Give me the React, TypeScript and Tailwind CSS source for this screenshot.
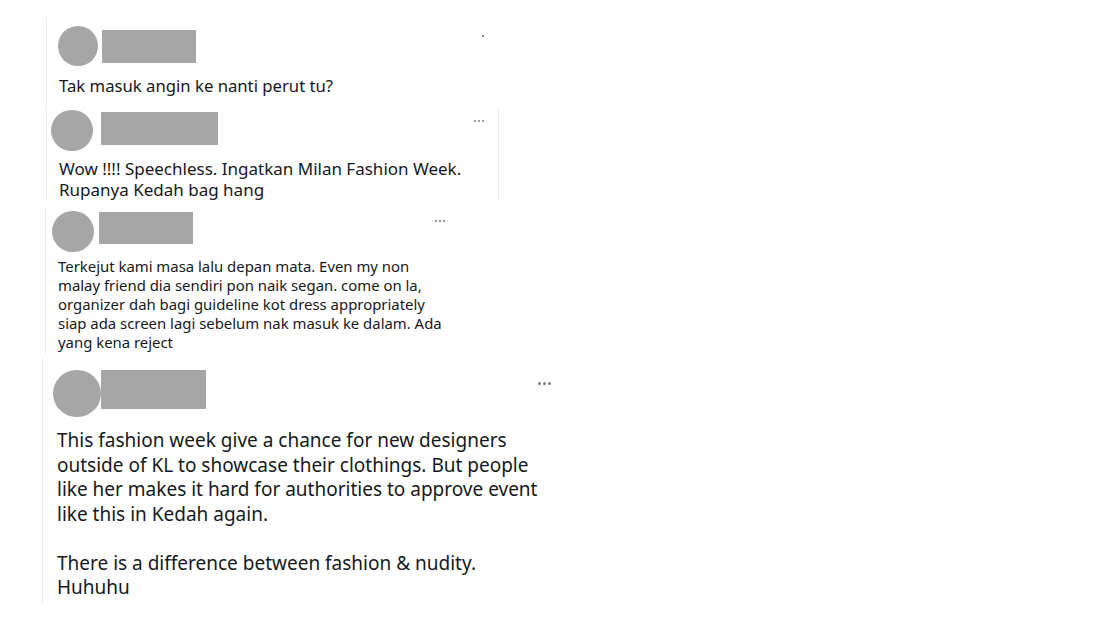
const font = { fontFamily: '"Segoe UI", "Noto Sans", "Open Sans", sans-serif' };

function Dots({ className, size }: { className: string; size: string }) {
    return (
        <div className={`absolute flex ${className}`}>
            <span className={`${size} rounded-full bg-[#7d7d7d]`} />
            <span className={`${size} rounded-full bg-[#7d7d7d]`} />
            <span className={`${size} rounded-full bg-[#7d7d7d]`} />
        </div>
    );
}

export default function App() {
    return (
        <div className="h-[619px] w-[1100px] overflow-hidden bg-white text-[#16191c]" style={font}>
            <div className="flex flex-col pt-[18px]">
                {/* reply 1 */}
                <div className="relative ml-[46px] h-[88px] w-[450px] border-l border-[#eeeeee]">
                    <div className="flex items-start pl-[11px] pt-[8px]">
                        <div className="h-[40px] w-[40px] rounded-full bg-[#a6a6a6]" />
                        <div className="ml-[4px] mt-[4px] h-[33px] w-[94px] bg-[#a6a6a6]" />
                    </div>
                    <p className="mt-[9px] pl-[12px] text-[16.7px] leading-[22px]">Tak masuk angin ke nanti perut tu?</p>
                    <div className="absolute left-[435px] top-[17px] h-[2px] w-[2px] rounded-full bg-[#555]" />
                </div>

                {/* reply 2 */}
                <div className="relative ml-[46px] mt-[1px] h-[94px] w-[453px] border-x border-[#eeeeee]">
                    <div className="flex items-start pl-[4px] pt-[3px]">
                        <div className="h-[41px] w-[42px] rounded-full bg-[#a6a6a6]" />
                        <div className="ml-[8px] mt-[2px] h-[33px] w-[117px] bg-[#a6a6a6]" />
                    </div>
                    <p className="mt-[7px] pl-[12px] text-[17px] leading-[21px]">
                        Wow !!!! Speechless. Ingatkan Milan Fashion Week.
                        <br />
                        Rupanya Kedah bag hang
                    </p>
                    <Dots className="left-[427px] top-[13px] gap-[2px]" size="h-[2px] w-[2px]" />
                </div>

                {/* reply 3 */}
                <div className="relative ml-[45px] mt-[7px] h-[145px] w-[420px] border-l border-[#eeeeee]">
                    <div className="flex items-start pl-[6px] pt-[3px]">
                        <div className="h-[41px] w-[42px] rounded-full bg-[#a6a6a6]" />
                        <div className="ml-[5px] mt-[1px] h-[32px] w-[94px] bg-[#a6a6a6]" />
                    </div>
                    <p className="mt-[5px] pl-[12px] text-[14.9px] leading-[19px]">
                        Terkejut kami masa lalu depan mata. Even my non
                        <br />
                        malay friend dia sendiri pon naik segan. come on la,
                        <br />
                        organizer dah bagi guideline kot dress appropriately
                        <br />
                        siap ada screen lagi sebelum nak masuk ke dalam. Ada
                        <br />
                        yang kena reject
                    </p>
                    <Dots className="left-[389px] top-[12px] gap-[2px]" size="h-[2px] w-[2px]" />
                </div>

                {/* reply 4 */}
                <div className="relative ml-[42px] mt-[5px] h-[247px] w-[520px] border-l border-[#eeeeee]">
                    <div className="flex items-start pl-[10px] pt-[12px]">
                        <div className="h-[47px] w-[48px] rounded-full bg-[#a6a6a6]" />
                        <div className="h-[39px] w-[105px] bg-[#a6a6a6]" />
                    </div>
                    <p className="mt-[11px] whitespace-nowrap pl-[14px] text-[19px] leading-[24.5px]">
                        This fashion week give a chance for new designers
                        <br />
                        outside of KL to showcase their clothings. But people
                        <br />
                        like her makes it hard for authorities to approve event
                        <br />
                        like this in Kedah again.
                        <br />
                        <br />
                        There is a difference between fashion &amp; nudity.
                        <br />
                        Huhuhu
                    </p>
                    <Dots className="left-[495px] top-[24px] gap-[2.5px]" size="h-[2.5px] w-[2.5px]" />
                </div>
            </div>
        </div>
    );
}
